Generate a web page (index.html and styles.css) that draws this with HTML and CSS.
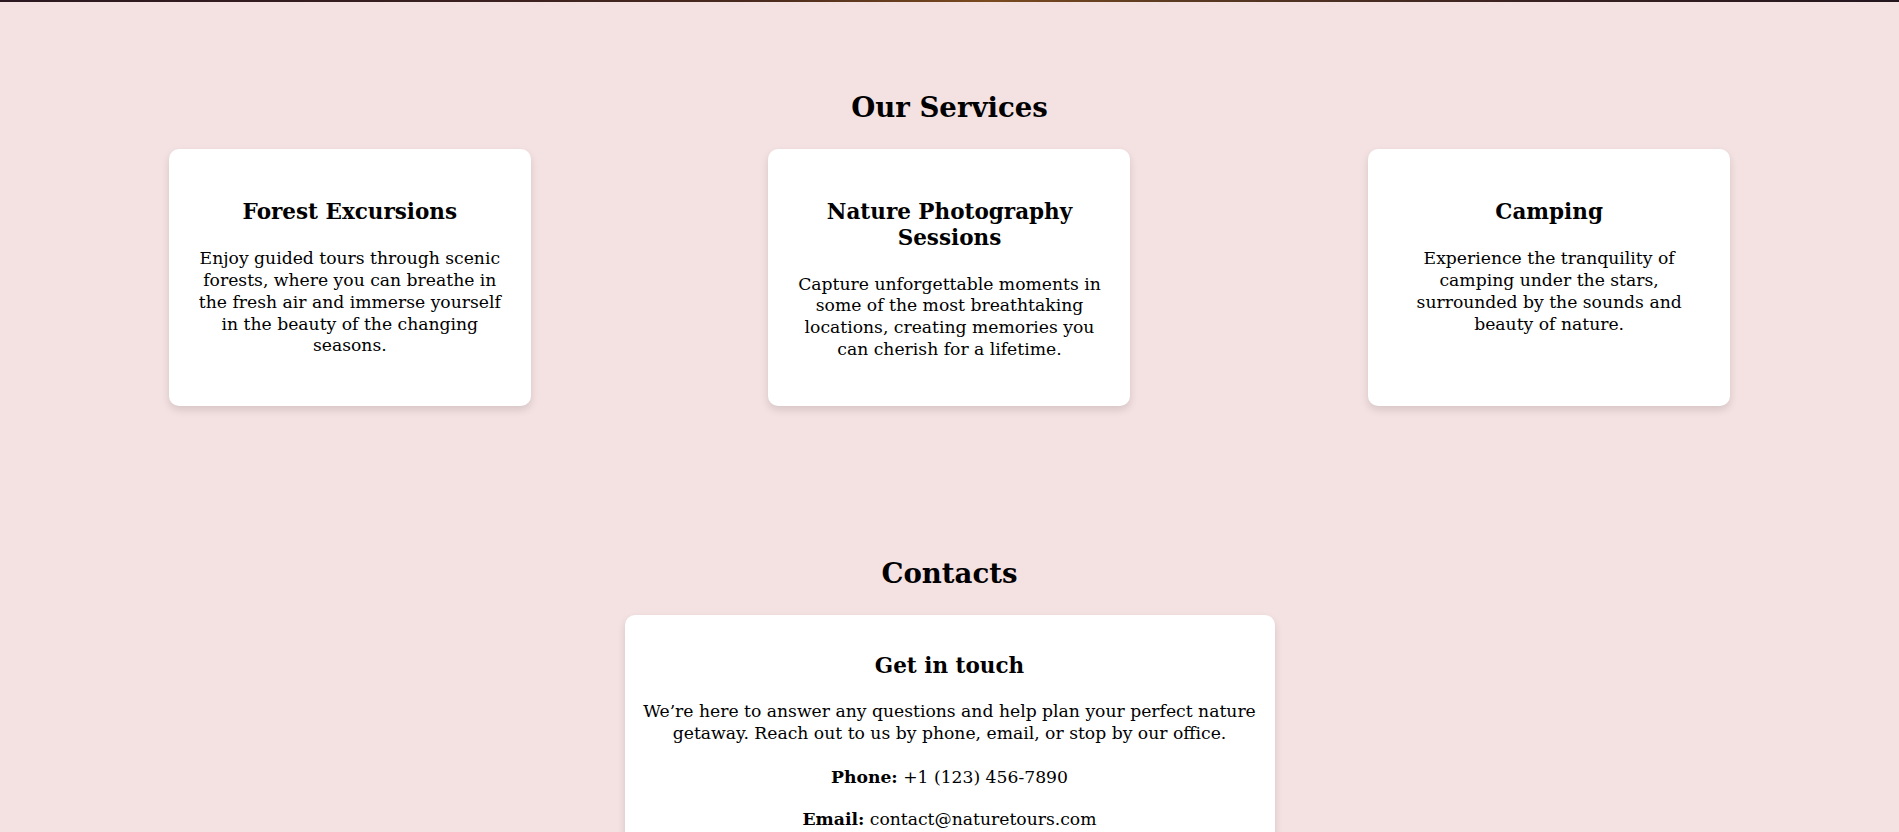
FILE: index.html
```html
<!DOCTYPE html>
<html lang="en">
<head>
<meta charset="utf-8">
<title>Nature Tours</title>
<link rel="stylesheet" href="styles.css">
</head>
<body>
<div class="hero-strip"></div>
<section class="services">
  <h2 class="section-title">Our Services</h2>
  <div class="service-list">
    <article class="service-card">
      <h3 class="card-title">Forest Excursions</h3>
      <p class="card-text">Enjoy guided tours through scenic forests, where you can breathe in the fresh air and immerse yourself in the beauty of the changing seasons.</p>
    </article>
    <article class="service-card">
      <h3 class="card-title">Nature Photography Sessions</h3>
      <p class="card-text">Capture unforgettable moments in some of the most breathtaking locations, creating memories you can cherish for a lifetime.</p>
    </article>
    <article class="service-card">
      <h3 class="card-title">Camping</h3>
      <p class="card-text">Experience the tranquility of camping under the stars, surrounded by the sounds and beauty of nature.</p>
    </article>
  </div>
</section>
<section class="contacts">
  <h2 class="section-title">Contacts</h2>
  <div class="contact-card">
    <h3 class="card-title contact-title">Get in touch</h3>
    <p class="card-text contact-intro">We’re here to answer any questions and help plan your perfect nature getaway. Reach out to us by phone, email, or stop by our office.</p>
    <p class="card-text contact-line"><strong>Phone:</strong> +1 (123) 456-7890</p>
    <p class="card-text contact-line"><strong>Email:</strong> contact@naturetours.com</p>
  </div>
</section>
</body>
</html>
```
FILE: styles.css
```css
body {
  margin: 0;
  background: #f4e1e2;
  color: #000;
  font-family: "DejaVu Serif", "Liberation Serif", serif;
}

.hero-strip {
  height: 2px;
  background: linear-gradient(90deg, #2b1820 0%, #3a2020 25%, #4a2a1e 40%, #7a4a1e 52%, #5a3a22 62%, #3a2222 80%, #24161e 100%);
}

.services {
  padding: 50px 50px 62px;
}

.contacts {
  padding: 50px 50px 40px;
}

.section-title {
  margin: 38px 0 22.6px;
  font-size: 27.6px;
  line-height: 36.4px;
  font-weight: bold;
  text-align: center;
}

.service-list {
  display: flex;
  justify-content: space-around;
  align-items: stretch;
}

.service-card {
  width: 362px;
  box-sizing: border-box;
  padding: 29px 28px 26px;
  background: #fff;
  border-radius: 10px;
  box-shadow: 0 4px 8px rgba(0, 0, 0, 0.12);
  text-align: center;
}

.card-title {
  margin: 21.4px 0 23.4px;
  font-size: 21.5px;
  line-height: 25.4px;
  font-weight: bold;
}

.card-text {
  margin: 19.2px 0;
  font-size: 17.2px;
  line-height: 21.8px;
}

.contact-card {
  width: 650px;
  box-sizing: border-box;
  margin: 0 auto;
  padding: 21px 18px 20px;
  background: #fff;
  border-radius: 10px;
  box-shadow: 0 4px 8px rgba(0, 0, 0, 0.12);
  text-align: center;
}

.contact-title {
  margin-top: 16.7px;
}

.contact-intro {
  margin-bottom: 21.6px;
}

.contact-line {
  margin: 20.4px 0;
}
```
